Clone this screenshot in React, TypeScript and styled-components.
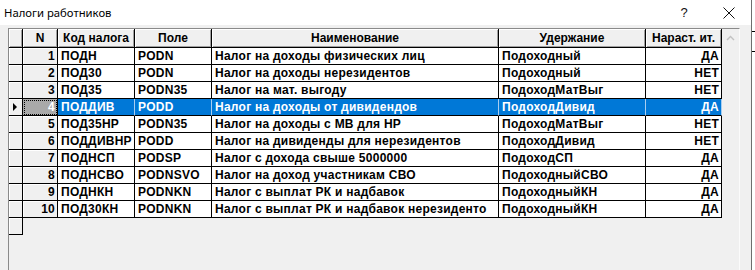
import styled, { createGlobalStyle, css } from 'styled-components';

const GlobalStyle = createGlobalStyle`
  html, body {
    margin: 0;
    padding: 0;
    background: #ffffff;
  }
  #root {
    width: 755px;
    height: 270px;
  }
`;

interface ITaxRow {
  id: number;
  code: string;
  field: string;
  name: string;
  hold: string;
  cumulative: string;
}

// name is stored as 40 chars max, so the last one comes truncated
const rows: ITaxRow[] = [
  { id: 1, code: 'ПОДН', field: 'PODN', name: 'Налог на доходы физических лиц', hold: 'Подоходный', cumulative: 'ДА' },
  { id: 2, code: 'ПОД30', field: 'PODN', name: 'Налог на доходы нерезидентов', hold: 'Подоходный', cumulative: 'НЕТ' },
  { id: 3, code: 'ПОД35', field: 'PODN35', name: 'Налог на мат. выгоду', hold: 'ПодоходМатВыг', cumulative: 'НЕТ' },
  { id: 4, code: 'ПОДДИВ', field: 'PODD', name: 'Налог на доходы от дивидендов', hold: 'ПодоходДивид', cumulative: 'ДА' },
  { id: 5, code: 'ПОД35НР', field: 'PODN35', name: 'Налог на доходы с МВ для НР', hold: 'ПодоходМатВыг', cumulative: 'НЕТ' },
  { id: 6, code: 'ПОДДИВНР', field: 'PODD', name: 'Налог на дивиденды для нерезидентов', hold: 'ПодоходДивид', cumulative: 'НЕТ' },
  { id: 7, code: 'ПОДНСП', field: 'PODSP', name: 'Налог с дохода свыше 5000000', hold: 'ПодоходСП', cumulative: 'ДА' },
  { id: 8, code: 'ПОДНСВО', field: 'PODNSVO', name: 'Налог на доход участникам СВО', hold: 'ПодоходныйСВО', cumulative: 'ДА' },
  { id: 9, code: 'ПОДНКН', field: 'PODNKN', name: 'Налог с выплат РК и надбавок', hold: 'ПодоходныйКН', cumulative: 'ДА' },
  { id: 10, code: 'ПОД30КН', field: 'PODNKN', name: 'Налог с выплат РК и надбавок нерезиденто', hold: 'ПодоходныйКН', cumulative: 'ДА' },
];

const selectedId = 4;

const Screen = styled.div`
  display: flex;
  width: 755px;
  height: 270px;
  overflow: hidden;
  background: #ffffff;
`;

const Window = styled.div`
  display: flex;
  flex-direction: column;
  width: 752px;
  height: 270px;
  border-right: 1px solid #6e6e6e;
  box-sizing: border-box;
`;

const BackStrip = styled.div`
  position: relative;
  flex: 1;
  background: #ffffff;
`;

const BackLine = styled.div<{ $top: number }>`
  position: absolute;
  left: 0;
  right: 0;
  top: ${(p) => p.$top}px;
  height: 1px;
  background: #000000;
`;

const TitleBar = styled.div`
  display: flex;
  align-items: center;
  height: 25px;
  background: #ffffff;
  padding-left: 4px;
  font-family: 'Segoe UI', 'Noto Sans', 'Liberation Sans', sans-serif;
  font-size: 11.3px;
  color: #000000;
`;

const Title = styled.span`
  flex: 1;
`;

const TitleButton = styled.div`
  display: flex;
  align-items: center;
  justify-content: center;
  width: 44px;
  height: 25px;
`;

const Help = styled.span`
  font-family: 'Liberation Sans', Arial, sans-serif;
  font-size: 13px;
  color: #111111;
  margin-right: 2px;
`;

const Client = styled.div`
  flex: 1;
  display: flex;
  background: #f0f0f0;
  padding: 3px 11px 0 8px;
  min-height: 0;
`;

const Grid = styled.div`
  display: flex;
  width: 732px;
  border-top: 1px solid #8a8a8a;
  border-left: 1px solid #8a8a8a;
  border-right: 1px solid #fbfbfb;
  box-sizing: border-box;
  background: #f0f0f0;
`;

const Table = styled.div`
  display: grid;
  grid-template-columns: 14px 35px 77px 77px 287px 147px 76px;
  grid-auto-rows: 17px;
  grid-template-rows: 19px;
  align-content: start;
  width: 713px;
  font-family: 'Liberation Sans', Arial, sans-serif;
  font-weight: bold;
  font-size: 12px;
  letter-spacing: 0.25px;
  color: #000000;
`;

type Kind = 'header' | 'fixed' | 'data';

const Cell = styled.div<{ $kind: Kind; $align?: 'left' | 'right' | 'center'; $selected?: boolean }>`
  position: relative;
  box-sizing: border-box;
  display: flex;
  align-items: center;
  justify-content: ${(p) => (p.$align === 'right' ? 'flex-end' : p.$align === 'center' ? 'center' : 'flex-start')};
  padding: 0 ${(p) => (p.$align === 'right' ? '2px' : '0')} 0 ${(p) => (p.$align === 'left' ? '3px' : '0')};
  border-right: 1px solid #000000;
  border-bottom: 1px solid #000000;
  white-space: nowrap;
  overflow: hidden;
  background: #ffffff;

  ${(p) =>
    p.$kind === 'header' &&
    css`
      background: #f0f0f0;
      box-shadow: inset 1px 1px 0 #ffffff, inset -1px -1px 0 #a0a0a0;
      font-weight: bold;
      letter-spacing: 0;
    `}

  ${(p) =>
    p.$kind === 'fixed' &&
    css`
      background: #f0f0f0;
      box-shadow: inset 1px 1px 0 #ffffff;
    `}

  ${(p) =>
    p.$selected &&
    p.$kind === 'data' &&
    css`
      background: #0078d7;
      color: #ffffff;
      border-right-color: #a8cdf0;
    `}

  ${(p) =>
    p.$selected &&
    p.$kind === 'fixed' &&
    css`
      background: #a9a9a9;
      color: #ffffff;
      box-shadow: none;
      outline: 1px dotted #000000;
      outline-offset: -2px;
    `}
`;

const Pointer = styled.span`
  width: 0;
  height: 0;
  margin-left: 1px;
  border-top: 4px solid transparent;
  border-bottom: 4px solid transparent;
  border-left: 4px solid #000000;
`;

const ScrollBar = styled.div`
  display: flex;
  flex-direction: column;
  width: 17px;
  background: #f0f0f0;
`;

const ScrollButton = styled.div`
  display: flex;
  align-items: center;
  justify-content: center;
  height: 17px;
`;

const headers = ['', 'N', 'Код налога', 'Поле', 'Наименование', 'Удержание', 'Нараст. ит.'];

export default function App() {
  return (
    <>
      <GlobalStyle />
      <Screen>
        <Window>
          <TitleBar>
            <Title>Налоги работников</Title>
            <TitleButton>
              <Help>?</Help>
            </TitleButton>
            <TitleButton>
              <svg width="12" height="12" viewBox="0 0 12 12">
                <path d="M0.5 0.5 L11.5 11.5 M11.5 0.5 L0.5 11.5" stroke="#111" strokeWidth="1" fill="none" />
              </svg>
            </TitleButton>
          </TitleBar>
          <Client>
            <Grid>
              <Table>
                {headers.map((h, i) => (
                  <Cell key={'h' + i} $kind="header" $align="center">
                    {h}
                  </Cell>
                ))}
                {rows.map((r) => {
                  const sel = r.id === selectedId;
                  return [
                    <Cell key={r.id + 'p'} $kind="fixed" $align="left">
                      {sel && <Pointer />}
                    </Cell>,
                    <Cell key={r.id + 'n'} $kind="fixed" $align="right" $selected={sel}>
                      {r.id}
                    </Cell>,
                    <Cell key={r.id + 'c'} $kind="data" $align="left" $selected={sel}>
                      {r.code}
                    </Cell>,
                    <Cell key={r.id + 'f'} $kind="data" $align="left" $selected={sel}>
                      {r.field}
                    </Cell>,
                    <Cell key={r.id + 'm'} $kind="data" $align="left" $selected={sel}>
                      {r.name}
                    </Cell>,
                    <Cell key={r.id + 'h'} $kind="data" $align="left" $selected={sel}>
                      {r.hold}
                    </Cell>,
                    <Cell key={r.id + 'a'} $kind="data" $align="right" $selected={sel}>
                      {r.cumulative}
                    </Cell>,
                  ];
                })}
                <Cell $kind="fixed" />
              </Table>
              <ScrollBar>
                <ScrollButton>
                  <svg width="9" height="6" viewBox="0 0 9 6">
                    <path d="M1 5 L4.5 1.5 L8 5" stroke="#c2c2c2" strokeWidth="1.4" fill="none" />
                  </svg>
                </ScrollButton>
              </ScrollBar>
            </Grid>
          </Client>
        </Window>
        <BackStrip>
          <BackLine $top={31} />
          <BackLine $top={51} />
        </BackStrip>
      </Screen>
    </>
  );
}
